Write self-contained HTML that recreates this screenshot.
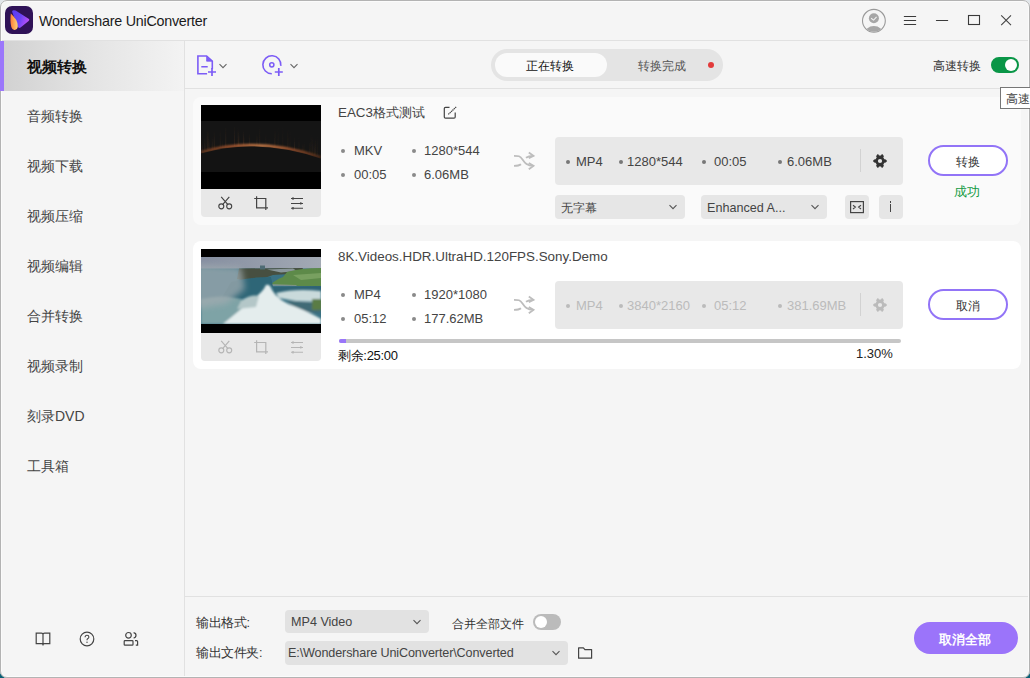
<!DOCTYPE html>
<html><head><meta charset="utf-8">
<style>
*{margin:0;padding:0;box-sizing:border-box}
html,body{width:1030px;height:678px;overflow:hidden;background:linear-gradient(#e2e6ea 0,#e2e6ea 50%,#0a5f74 50%)}
body{font-family:"Liberation Sans",sans-serif;position:relative}
.a{position:absolute}
#win{position:absolute;left:0;top:0;width:1030px;height:678px;background:#f5f5f5;border-radius:7px;overflow:hidden}
#frame{position:absolute;left:0;top:0;width:1030px;height:678px;border:1px solid #b3b3b3;border-radius:7px;box-shadow:inset 0 0 0 1px #fbfbfb;pointer-events:none}
.t{position:absolute;white-space:nowrap;line-height:1}
.sep{position:absolute;background:#e1e1e1}
.nav{position:absolute;left:27px;font-size:14px;color:#444;line-height:20px}
.card{position:absolute;left:193px;width:828px;background:#fefefe;border-radius:8px}
.thumb{position:absolute;left:8px;width:120px;background:#000}
.strip{position:absolute;left:8px;width:120px;height:28px;background:#e8e8e8;border-radius:0 0 4px 4px}
.info{position:absolute;font-size:13px;color:#444;line-height:16px}
.dot{position:absolute;width:4px;height:4px;border-radius:50%;background:#8a8a8a}
.obox{position:absolute;left:362px;width:348px;height:48px;background:#e8e8e8;border-radius:4px}
.btn{position:absolute;left:735px;width:80px;height:31px;border:2px solid #9274f7;border-radius:16px;background:#fff;font-size:12px;color:#333;text-align:center;line-height:27px;padding-top:1.5px}
.dd{position:absolute;background:#e6e6e6;border-radius:4px;font-size:13px;color:#444}
</style></head><body>

<svg width="0" height="0" style="position:absolute">
<defs>
<symbol id="i-sc" viewBox="0 0 16 16"><path d="M3.2 1.8L9.9 9.6M11.3 1.8L4.6 9.6" fill="none" stroke="currentColor" stroke-width="1.15"/><circle cx="3.3" cy="11.3" r="2.5" fill="none" stroke="currentColor" stroke-width="1.15"/><circle cx="11.2" cy="11.3" r="2.5" fill="none" stroke="currentColor" stroke-width="1.15"/></symbol>
<symbol id="i-cr" viewBox="0 0 16 16"><path d="M2.6 1.2V12.8H14M0.2 3.5H11.8V15" fill="none" stroke="currentColor" stroke-width="1.2"/></symbol>
<symbol id="i-sl" viewBox="0 0 16 16"><path d="M1 3.5H13M1 8.4H13M1 13.3H13" fill="none" stroke="currentColor" stroke-width="1.05"/><path d="M3 2.3V4.7M10.8 7.2V9.6M3 12.1V14.5" stroke="currentColor" stroke-width="1.3"/></symbol>
<symbol id="i-sh" viewBox="0 0 24 20"><path d="M2 4.8C6.5 4.8 8 4.8 10.5 8.5S15 14.9 21.5 14.9M2 14.9C5 14.9 7 14.9 9 13.2M14 6.8C16 5.2 18 4.8 21.5 4.8" fill="none" stroke="currentColor" stroke-width="1.8"/><path d="M16.8 1.5L21.5 4.8L16.8 7.3M16.8 12L21.5 14.9L16.8 18.3" fill="none" stroke="currentColor" stroke-width="1.8"/></symbol>
<symbol id="i-gear" viewBox="0 0 16 16"><path fill="currentColor" fill-rule="evenodd" d="M5.4 1.2H6.3L7 2.4H9L9.7 1.2H10.6L11.9 3.2L11.3 4.4L12.4 6.3L13.8 6.5L15.1 8L13.8 9.5L12.4 9.7L11.3 11.6L11.9 12.8L10.6 14.8H9.7L9 13.6H7L6.3 14.8H5.4L4.1 12.8L4.7 11.6L3.6 9.7L2.2 9.5L0.9 8L2.2 6.5L3.6 6.3L4.7 4.4L4.1 3.2Z M8 5.9A2.1 2.1 0 1 0 8 10.1A2.1 2.1 0 1 0 8 5.9Z"/></symbol>
<symbol id="i-chev" viewBox="0 0 10 8"><path d="M1.5 2.2L5 5.7L8.5 2.2" fill="none" stroke="currentColor" stroke-width="1.1"/></symbol>
</defs></svg>
<div id="win">
<!-- title bar -->
<div class="a" style="left:5px;top:6px;width:28px;height:28px;border-radius:7px;background:#2f1257">
<svg width="28" height="28" viewBox="0 0 28 28" style="position:absolute;left:0;top:0">
<defs><linearGradient id="pg" x1="0" y1="0" x2="1" y2="0.4"><stop offset="0" stop-color="#5a3af2"/><stop offset="0.55" stop-color="#6a44f5"/><stop offset="1" stop-color="#b64ff8"/></linearGradient>
<linearGradient id="og" x1="0" y1="0" x2="1" y2="0"><stop offset="0" stop-color="#ff7d35"/><stop offset="1" stop-color="#ffd47a"/></linearGradient></defs>
<path d="M8.6 4.2Q6.6 4.4 7.4 6.6L13 21Q14 22.8 15.6 21.6L23.6 15Q25.2 13.8 23.6 12.7L10.6 4.6Q9.6 4 8.6 4.2Z" fill="url(#pg)"/>
<path d="M5.8 7.6Q4.9 16 6.3 21Q7.3 24.2 9.6 23.9Q12.8 23.4 12.8 20Q12.5 13.5 5.8 7.6Z" fill="url(#og)"/>
</svg></div>
<div class="t" style="left:39px;top:14.3px;font-size:14.3px;letter-spacing:-0.24px;color:#1a1a1a">Wondershare UniConverter</div>
<!-- window controls -->
<svg class="a" style="left:860px;top:7px" width="28" height="28" viewBox="0 0 28 28">
<circle cx="13.9" cy="13.8" r="11.4" fill="none" stroke="#999" stroke-width="1.1"/>
<clipPath id="cc"><circle cx="13.9" cy="13.8" r="11"/></clipPath>
<g clip-path="url(#cc)"><circle cx="13.9" cy="11.2" r="5" fill="#a6a6a6"/><ellipse cx="13.9" cy="27.3" rx="9.5" ry="8.3" fill="#a6a6a6"/></g>
<path d="M11.1 11.3L13.6 13.1L16.6 9.9" fill="none" stroke="#f2f2f2" stroke-width="1.1"/>
</svg>
<svg class="a" style="left:903px;top:13px" width="14" height="14" viewBox="0 0 14 14"><path d="M1.3 3.5H12.7M1.3 7.5H12.7M1.3 11.5H12.7" stroke="#3a3a3a" stroke-width="1.05" stroke-linecap="round"/></svg>
<svg class="a" style="left:934px;top:13px" width="16" height="14" viewBox="0 0 16 14"><path d="M2.4 7.5H13.7" stroke="#3a3a3a" stroke-width="1.05" stroke-linecap="round"/></svg>
<svg class="a" style="left:966px;top:13px" width="16" height="14" viewBox="0 0 16 14"><rect x="2.5" y="2.5" width="11" height="9" fill="none" stroke="#3a3a3a" stroke-width="1.1"/></svg>
<svg class="a" style="left:998px;top:13px" width="16" height="14" viewBox="0 0 16 14"><path d="M3.2 2.4L13 12.2M13 2.4L3.2 12.2" stroke="#444" stroke-width="1.1"/></svg>
<div class="sep" style="left:0;top:40px;width:1030px;height:1px"></div>

<!-- sidebar -->
<div class="a" style="left:0;top:41px;width:184px;height:50px;background:linear-gradient(90deg,#d1d1d1 0%,#e4e4e4 50%,#f3f3f3 100%)"></div>
<div class="a" style="left:0;top:41px;width:4px;height:50px;background:#9b77fb"></div>
<div class="nav" style="top:57px;font-weight:bold;color:#111;font-size:15px">视频转换</div>
<div class="nav" style="top:106px">音频转换</div>
<div class="nav" style="top:156px">视频下载</div>
<div class="nav" style="top:206px">视频压缩</div>
<div class="nav" style="top:256px">视频编辑</div>
<div class="nav" style="top:306px">合并转换</div>
<div class="nav" style="top:356px">视频录制</div>
<div class="nav" style="top:406px">刻录DVD</div>
<div class="nav" style="top:456px">工具箱</div>
<div class="sep" style="left:184px;top:41px;width:1px;height:637px"></div>


<!-- toolbar -->
<svg class="a" style="left:194px;top:52px" width="24" height="26" viewBox="0 0 24 26">
<path d="M13.1 21.7H3.9V4H12.6L18.3 9.2V16.9" fill="none" stroke="#7c5cf6" stroke-width="1.6"/>
<path d="M12.6 4.6V9.2H17.6Z" fill="#7c5cf6" stroke="#7c5cf6" stroke-width="0.8"/>
<path d="M7.3 14.7H13.7" stroke="#7c5cf6" stroke-width="1.6"/>
<path d="M18 16V24M14 20H22" stroke="#7c5cf6" stroke-width="1.7"/>
</svg>
<svg class="a" style="left:218px;top:62px" width="10" height="8"><use href="#i-chev" style="color:#666"/></svg>
<svg class="a" style="left:258px;top:51px" width="26" height="26" viewBox="0 0 26 26">
<path d="M13.8 22.8 A9 9 0 1 1 22.8 14.8" fill="none" stroke="#7c5cf6" stroke-width="1.6"/>
<circle cx="13.8" cy="13.8" r="2.1" fill="none" stroke="#7c5cf6" stroke-width="1.5"/>
<path d="M20.8 17V25M16.8 21H24.8" stroke="#7c5cf6" stroke-width="1.7"/>
</svg>
<svg class="a" style="left:289px;top:62px" width="10" height="8"><use href="#i-chev" style="color:#666"/></svg>

<div class="a" style="left:491px;top:49px;width:232px;height:32px;border-radius:16px;background:#e4e4e4"></div>
<div class="a" style="left:495px;top:53px;width:112px;height:24px;border-radius:12px;background:#fafafa"></div>
<div class="t" style="left:500px;width:100px;text-align:center;top:59.5px;font-size:12.4px;color:#111">正在转换</div>
<div class="t" style="left:612px;width:100px;text-align:center;top:59.5px;font-size:12.4px;color:#555">转换完成</div>
<div class="a" style="left:707.5px;top:61.8px;width:6px;height:6px;border-radius:50%;background:#e23a3a"></div>

<div class="t" style="left:932.5px;top:60px;font-size:12.4px;color:#333">高速转换</div>
<div class="a" style="left:991px;top:57px;width:28px;height:16px;border-radius:8px;background:#0a9647"></div>
<div class="a" style="left:1005px;top:59px;width:12px;height:12px;border-radius:50%;background:#fff"></div>

<!-- main area -->
<div class="a" style="left:185px;top:89px;width:845px;height:507px;background:#f5f5f5"></div>
<div class="sep" style="left:184px;top:88px;width:846px;height:1px"></div>

<!-- card 1 -->
<div class="card" style="top:97px;height:128px;background:#fafafa">
 <div class="thumb" style="top:8px;height:84px;overflow:hidden">
  <svg width="120" height="84" viewBox="0 0 120 84" style="position:absolute;left:0;top:0">
   <defs><filter id="bl" x="-10%" y="-50%" width="120%" height="200%"><feGaussianBlur stdDeviation="0.8"/></filter><filter id="bl2"><feGaussianBlur stdDeviation="0.4"/></filter>
   <linearGradient id="sg" x1="0" y1="0" x2="0" y2="1"><stop offset="0" stop-color="#c07040" stop-opacity="0"/><stop offset="1" stop-color="#c07040"/></linearGradient>
   <linearGradient id="ag" x1="0" y1="0" x2="1" y2="0"><stop offset="0" stop-color="#6a3a20"/><stop offset="0.25" stop-color="#b05a30"/><stop offset="0.5" stop-color="#e08a50"/><stop offset="0.75" stop-color="#b05a30"/><stop offset="1" stop-color="#4a2a18"/></linearGradient></defs>
   <rect x="0" y="16" width="120" height="51" fill="#151515"/>
   <g filter="url(#bl2)"><rect x="73.5" y="23.1" width="1" height="18.4" fill="url(#sg)" opacity="0.09"/><rect x="111.2" y="31.2" width="1" height="18.4" fill="url(#sg)" opacity="0.10"/><rect x="3.4" y="32.0" width="1" height="14.5" fill="url(#sg)" opacity="0.17"/><rect x="76.6" y="21.3" width="1" height="20.6" fill="url(#sg)" opacity="0.05"/><rect x="55.4" y="28.9" width="1" height="11.5" fill="url(#sg)" opacity="0.12"/><rect x="67.7" y="32.8" width="1" height="8.2" fill="url(#sg)" opacity="0.05"/><rect x="33.0" y="20.4" width="1" height="20.8" fill="url(#sg)" opacity="0.14"/><rect x="18.8" y="24.0" width="1" height="19.2" fill="url(#sg)" opacity="0.08"/><rect x="72.9" y="31.7" width="1" height="9.8" fill="url(#sg)" opacity="0.04"/><rect x="102.8" y="36.2" width="1" height="10.9" fill="url(#sg)" opacity="0.05"/><rect x="115.9" y="30.9" width="1" height="20.2" fill="url(#sg)" opacity="0.06"/><rect x="113.5" y="34.7" width="1" height="15.5" fill="url(#sg)" opacity="0.08"/><rect x="24.2" y="21.2" width="1" height="21.2" fill="url(#sg)" opacity="0.14"/><rect x="114.1" y="30.0" width="1" height="20.5" fill="url(#sg)" opacity="0.06"/><rect x="42.6" y="30.2" width="1" height="10.3" fill="url(#sg)" opacity="0.08"/><rect x="7.7" y="33.2" width="1" height="12.2" fill="url(#sg)" opacity="0.13"/><rect x="0.4" y="29.8" width="1" height="17.5" fill="url(#sg)" opacity="0.10"/><rect x="36.6" y="21.5" width="1" height="19.5" fill="url(#sg)" opacity="0.11"/><rect x="37.3" y="26.1" width="1" height="14.7" fill="url(#sg)" opacity="0.14"/><rect x="6.7" y="24.0" width="1" height="21.7" fill="url(#sg)" opacity="0.07"/><rect x="88.5" y="24.0" width="1" height="19.8" fill="url(#sg)" opacity="0.04"/><rect x="93.0" y="31.6" width="1" height="13.1" fill="url(#sg)" opacity="0.08"/><rect x="1.1" y="38.5" width="1" height="8.7" fill="url(#sg)" opacity="0.08"/><rect x="112.7" y="39.3" width="1" height="10.8" fill="url(#sg)" opacity="0.09"/><rect x="109.7" y="27.9" width="1" height="21.2" fill="url(#sg)" opacity="0.06"/><rect x="41.9" y="25.2" width="1" height="15.3" fill="url(#sg)" opacity="0.15"/><rect x="12.8" y="25.9" width="1" height="18.5" fill="url(#sg)" opacity="0.15"/><rect x="101.4" y="38.2" width="1" height="8.5" fill="url(#sg)" opacity="0.10"/><rect x="10.8" y="32.0" width="1" height="12.8" fill="url(#sg)" opacity="0.13"/><rect x="108.3" y="35.9" width="1" height="12.8" fill="url(#sg)" opacity="0.10"/><rect x="64.3" y="28.3" width="1" height="12.4" fill="url(#sg)" opacity="0.06"/><rect x="20.9" y="33.7" width="1" height="9.1" fill="url(#sg)" opacity="0.08"/><rect x="81.3" y="20.6" width="1" height="22.0" fill="url(#sg)" opacity="0.05"/><rect x="5.7" y="24.1" width="1" height="21.8" fill="url(#sg)" opacity="0.12"/><rect x="47.9" y="29.0" width="1" height="11.3" fill="url(#sg)" opacity="0.13"/><rect x="97.5" y="31.4" width="1" height="14.4" fill="url(#sg)" opacity="0.07"/><rect x="6.6" y="24.9" width="1" height="20.8" fill="url(#sg)" opacity="0.07"/><rect x="58.2" y="20.7" width="1" height="19.7" fill="url(#sg)" opacity="0.08"/><rect x="86.3" y="22.1" width="1" height="21.3" fill="url(#sg)" opacity="0.08"/><rect x="93.0" y="35.2" width="1" height="9.5" fill="url(#sg)" opacity="0.07"/></g>
   <path d="M0 47.4 Q56 31 120 52.5" fill="none" stroke="url(#ag)" stroke-width="2.4" filter="url(#bl)"/>
   <path d="M0 48.6 Q56 32.2 120 53.7 L120 67 L0 67Z" fill="#131313"/>
  </svg>
 </div>
 <div class="strip" style="top:92px">
  <svg class="a" style="left:17px;top:6px;color:#444" width="16" height="16"><use href="#i-sc"/></svg>
  <svg class="a" style="left:53px;top:6px;color:#444" width="16" height="16"><use href="#i-cr"/></svg>
  <svg class="a" style="left:89px;top:6px;color:#444" width="16" height="16"><use href="#i-sl"/></svg>
 </div>

 <div class="t" style="left:145px;top:8px;font-size:13.4px;color:#444;line-height:16px">EAC3格式测试</div>
 <svg class="a" style="left:250px;top:9px" width="14" height="14" viewBox="0 0 14 14"><path d="M6.5 1.3H2.5Q1.3 1.3 1.3 2.5V11Q1.3 12.2 2.5 12.2H11Q12.2 12.2 12.2 11V6.5" fill="none" stroke="#444" stroke-width="1.2"/><path d="M5.3 8.4L13.5 0.6" stroke="#444" stroke-width="1.2" stroke-dasharray="1.4 0.5"/></svg>
 <div class="dot" style="left:148px;top:52px"></div><div class="info" style="left:161px;top:46px">MKV</div>
 <div class="dot" style="left:219px;top:52px"></div><div class="info" style="left:231px;top:46px">1280*544</div>
 <div class="dot" style="left:148px;top:76px"></div><div class="info" style="left:161px;top:70px">00:05</div>
 <div class="dot" style="left:219px;top:76px"></div><div class="info" style="left:231px;top:70px">6.06MB</div>
 <svg class="a" style="left:319.3px;top:54px;color:#bdbdbd" width="24" height="20"><use href="#i-sh"/></svg>
 <div class="obox" style="top:40px">
  <div class="dot" style="left:11px;top:23px;background:#777"></div><div class="info" style="left:21px;top:17px">MP4</div>
  <div class="dot" style="left:64px;top:23px;background:#777"></div><div class="info" style="left:72px;top:17px">1280*544</div>
  <div class="dot" style="left:147px;top:23px;background:#777"></div><div class="info" style="left:159px;top:17px">00:05</div>
  <div class="dot" style="left:223px;top:23px;background:#777"></div><div class="info" style="left:232px;top:17px">6.06MB</div>
  <div class="a" style="left:305px;top:12px;width:1px;height:23px;background:#d2d2d2"></div>
  <svg class="a" style="left:317px;top:16px;color:#333" width="16" height="16"><use href="#i-gear"/></svg>
 </div>
 <div class="dd" style="left:362px;top:98px;width:130px;height:24px"><div class="t" style="left:6px;top:4.5px;font-size:12.4px;line-height:16px">无字幕</div><svg class="a" style="left:113px;top:8px;color:#555" width="10" height="8"><use href="#i-chev"/></svg></div>
 <div class="dd" style="left:508px;top:98px;width:126px;height:24px"><div class="t" style="left:6px;top:4.5px;font-size:12.6px;line-height:16px">Enhanced A...</div><svg class="a" style="left:109px;top:8px;color:#555" width="10" height="8"><use href="#i-chev"/></svg></div>
 <div class="dd" style="left:652px;top:98px;width:24px;height:24px"><svg class="a" style="left:5px;top:6px" width="14" height="13" viewBox="0 0 14 13"><rect x="0.6" y="0.6" width="12.8" height="11" fill="none" stroke="#444" stroke-width="1.2"/><path d="M3 4.2L5.4 6.1L3 8M11 4.2L8.6 6.1L11 8" fill="none" stroke="#444" stroke-width="1.1"/></svg></div>
 <div class="dd" style="left:686px;top:98px;width:24px;height:24px"><div class="a" style="left:11px;top:6px;width:1.3px;height:1.5px;background:#444"></div><div class="a" style="left:11px;top:9px;width:1.3px;height:8px;background:#444"></div></div>
 <div class="btn" style="top:48px">转换</div>
 <div class="t" style="left:761px;top:87px;font-size:12.5px;color:#129a42;line-height:16px">成功</div>

</div>

<!-- card 2 -->
<div class="card" style="top:241px;height:128px;background:#fff">
 <div class="thumb" style="top:8px;height:84px;overflow:hidden">
  <svg width="120" height="84" viewBox="0 0 120 84" style="position:absolute;left:0;top:0">
   <defs><filter id="nb" x="-20%" y="-20%" width="140%" height="140%"><feGaussianBlur stdDeviation="1.3"/></filter><filter id="nb2" x="-20%" y="-20%" width="140%" height="140%"><feGaussianBlur stdDeviation="0.6"/></filter><filter id="nb3" x="-50%" y="-50%" width="200%" height="200%"><feGaussianBlur stdDeviation="3"/></filter>
   <clipPath id="band"><rect x="0" y="8" width="120" height="67"/></clipPath>
   <linearGradient id="sky" x1="0" y1="0" x2="1" y2="0"><stop offset="0" stop-color="#858ea0"/><stop offset="1" stop-color="#a3aab4"/></linearGradient></defs>
   <g clip-path="url(#band)">
    <rect x="0" y="8" width="120" height="67" fill="#3a7284"/>
    <rect x="0" y="8" width="120" height="11.5" fill="url(#sky)"/>
    <g filter="url(#nb2)">
    <path d="M38 19.5 L102 19 L100 23 L88 25 L72 26 L58 31 L44 32 L36 30Z" fill="#46503f"/>
    <rect x="59" y="16.5" width="5" height="4" fill="#4f6c74"/>
    <path d="M66 20.5 L92 19.5 L96 22 L80 23.5 Z" fill="#8a979a"/>
    <path d="M86 23 Q100 19 120 19 L120 37 L98 37 L70 35.5 Q74 31 82 28 Z" fill="#5d8a4a"/>
    <path d="M92 26 L120 24 L120 29 L100 31 Z" fill="#78a060"/>
    <path d="M70 35 L95 36 L96 37 L70 37Z" fill="#8f9a96" opacity="0.7"/>
    <path d="M30 33 Q45 28 70 28 L74 48 L20 50Z" fill="#2f6677"/>
    <path d="M72 38 L120 37 L120 44 L74 47Z" fill="#2f6474"/>
    </g>
    <g filter="url(#nb)">
    <path d="M75 44 Q95 39 120 42 L120 53 L95 52 L78 49Z" fill="#c9dadb"/>
    <path d="M86 52 L114 54 L120 64 L98 62Z" fill="#3f6a76"/>
    <rect x="111" y="50" width="10" height="11" fill="#5a7c44"/>
    <path d="M0 50 Q25 44 45 52 L40 75 L0 75Z" fill="#7ea3a6"/>
    <path d="M65 36 Q69 35 71 41 Q77 52 95 58 Q110 64 120 70 L120 75 L22 75 Q38 62 52 50 Q62 43 65 36Z" fill="#e4eded"/>
    <path d="M40 52 Q50 45 58 47 L55 58 L36 60Z" fill="#b4c7c8"/>
    </g>
    <path d="M-5 15 L40 18 L44 40 L25 55 L-5 60Z" fill="#a0abb0" opacity="0.75" filter="url(#nb3)"/>
   </g>
  </svg>
 </div>

 <div class="strip" style="top:92px">
  <svg class="a" style="left:17px;top:6px;color:#b5b5b5" width="16" height="16"><use href="#i-sc"/></svg>
  <svg class="a" style="left:53px;top:6px;color:#b5b5b5" width="16" height="16"><use href="#i-cr"/></svg>
  <svg class="a" style="left:89px;top:6px;color:#b5b5b5" width="16" height="16"><use href="#i-sl"/></svg>
 </div>
 <div class="t" style="left:145px;top:8px;font-size:13.4px;color:#444;line-height:16px">8K.Videos.HDR.UltraHD.120FPS.Sony.Demo</div>
 <div class="dot" style="left:148px;top:52px"></div><div class="info" style="left:161px;top:46px">MP4</div>
 <div class="dot" style="left:219px;top:52px"></div><div class="info" style="left:231px;top:46px">1920*1080</div>
 <div class="dot" style="left:148px;top:76px"></div><div class="info" style="left:161px;top:70px">05:12</div>
 <div class="dot" style="left:219px;top:76px"></div><div class="info" style="left:231px;top:70px">177.62MB</div>
 <svg class="a" style="left:319.3px;top:54px;color:#bdbdbd" width="24" height="20"><use href="#i-sh"/></svg>
 <div class="obox" style="top:40px">
  <div class="dot" style="left:11px;top:23px;background:#bbb"></div><div class="info" style="left:21px;top:17px;color:#bbb">MP4</div>
  <div class="dot" style="left:64px;top:23px;background:#bbb"></div><div class="info" style="left:72px;top:17px;color:#bbb">3840*2160</div>
  <div class="dot" style="left:147px;top:23px;background:#bbb"></div><div class="info" style="left:159px;top:17px;color:#bbb">05:12</div>
  <div class="dot" style="left:223px;top:23px;background:#bbb"></div><div class="info" style="left:232px;top:17px;color:#bbb">381.69MB</div>
  <div class="a" style="left:305px;top:12px;width:1px;height:23px;background:#d2d2d2"></div>
  <svg class="a" style="left:317px;top:16px;color:#bbb" width="16" height="16"><use href="#i-gear"/></svg>
 </div>
 <div class="btn" style="top:48px">取消</div>
 <div class="a" style="left:146px;top:98px;width:562px;height:4px;border-radius:2px;background:#c6c6c6"></div>
 <div class="a" style="left:146px;top:98px;width:7px;height:4px;border-radius:2px 0 0 2px;background:#9a76f9"></div>
 <div class="t" style="left:145px;top:106.5px;font-size:13px;letter-spacing:-0.32px;color:#111;line-height:16px">剩余:25:00</div>
 <div class="t" style="left:663px;top:105px;font-size:13px;color:#222;line-height:16px">1.30%</div>
</div>

<div class="sep" style="left:184px;top:596px;width:846px;height:1px"></div>


<!-- bottom -->
<div class="t" style="left:196px;top:615px;font-size:12.5px;letter-spacing:-0.4px;color:#333;line-height:16px">输出格式:</div>
<div class="dd" style="left:285px;top:610px;width:144px;height:23px;background:#e2e2e2"><div class="t" style="left:6px;top:4px;font-size:12.6px;line-height:16px">MP4 Video</div><svg class="a" style="left:127px;top:8px;color:#555" width="10" height="8"><use href="#i-chev"/></svg></div>
<div class="t" style="left:452px;top:615.5px;font-size:12.4px;color:#333;line-height:16px">合并全部文件</div>
<div class="a" style="left:533px;top:614px;width:28px;height:16px;border-radius:8px;background:#bbbbbb"></div>
<div class="a" style="left:535px;top:616px;width:12px;height:12px;border-radius:50%;background:#fff"></div>
<div class="t" style="left:196px;top:645px;font-size:12.5px;letter-spacing:-0.4px;color:#333;line-height:16px">输出文件夹:</div>
<div class="dd" style="left:285px;top:641px;width:283px;height:24px;background:#e2e2e2"><div class="t" style="left:3px;top:4px;font-size:12.6px;letter-spacing:-0.12px;line-height:16px">E:\Wondershare UniConverter\Converted</div><svg class="a" style="left:266px;top:8px;color:#555" width="10" height="8"><use href="#i-chev"/></svg></div>
<svg class="a" style="left:577px;top:646px" width="16" height="14" viewBox="0 0 16 14"><path d="M1.6 12.2V1.8H6.4L7.9 3.6H14.6V12.2Z" fill="none" stroke="#444" stroke-width="1.2" stroke-linejoin="round"/></svg>
<div class="a" style="left:914px;top:622px;width:104px;height:32px;border-radius:16px;background:#9b74fa;color:#fff;font-size:13px;font-weight:bold;text-align:center;line-height:32px;padding-top:2px;text-indent:-2px">取消全部</div>

<svg class="a" style="left:35px;top:631px" width="16" height="16" viewBox="0 0 16 16"><path d="M1.2 2.2H6.5Q8 2.2 8 3.5V13.5Q8 12.6 6.5 12.6H1.2Z M14.8 2.2H9.5Q8 2.2 8 3.5V13.5Q8 12.6 9.5 12.6H14.8Z" fill="none" stroke="#444" stroke-width="1.2"/><path d="M8 12.6V14.6" stroke="#444" stroke-width="1.2"/></svg>
<svg class="a" style="left:79px;top:631px" width="16" height="16" viewBox="0 0 16 16"><circle cx="8" cy="8" r="6.8" fill="none" stroke="#444" stroke-width="1.2"/><path d="M6.1 6.2Q6.1 4.3 8 4.3Q9.9 4.3 9.9 6Q9.9 7.2 8.6 7.8Q8 8.1 8 9.2" fill="none" stroke="#444" stroke-width="1.1"/><circle cx="8" cy="11.2" r="0.7" fill="#444"/></svg>
<svg class="a" style="left:123px;top:631px" width="16" height="16" viewBox="0 0 16 16"><circle cx="5.5" cy="4.3" r="2.8" fill="none" stroke="#444" stroke-width="1.2"/><rect x="1.2" y="9.6" width="8.8" height="4.6" rx="0.8" fill="none" stroke="#444" stroke-width="1.2"/><path d="M10.6 1.6Q13 2 13 4.3Q13 6.6 10.6 7M12 9.6H13.6Q14.6 9.6 14.6 10.6V14.2H12.8" fill="none" stroke="#444" stroke-width="1.2"/></svg>

</div>
<div id="frame"></div>
<div class="a" style="left:1000px;top:87px;width:40px;height:22px;background:#fff;border:1px solid #767676;overflow:hidden"><div class="t" style="left:5px;top:2.5px;font-size:12.4px;color:#444;line-height:16px">高速转换</div></div>
<div class="a" style="left:0;top:41px;width:4px;height:50px;background:#9b77fb"></div>
</body></html>
